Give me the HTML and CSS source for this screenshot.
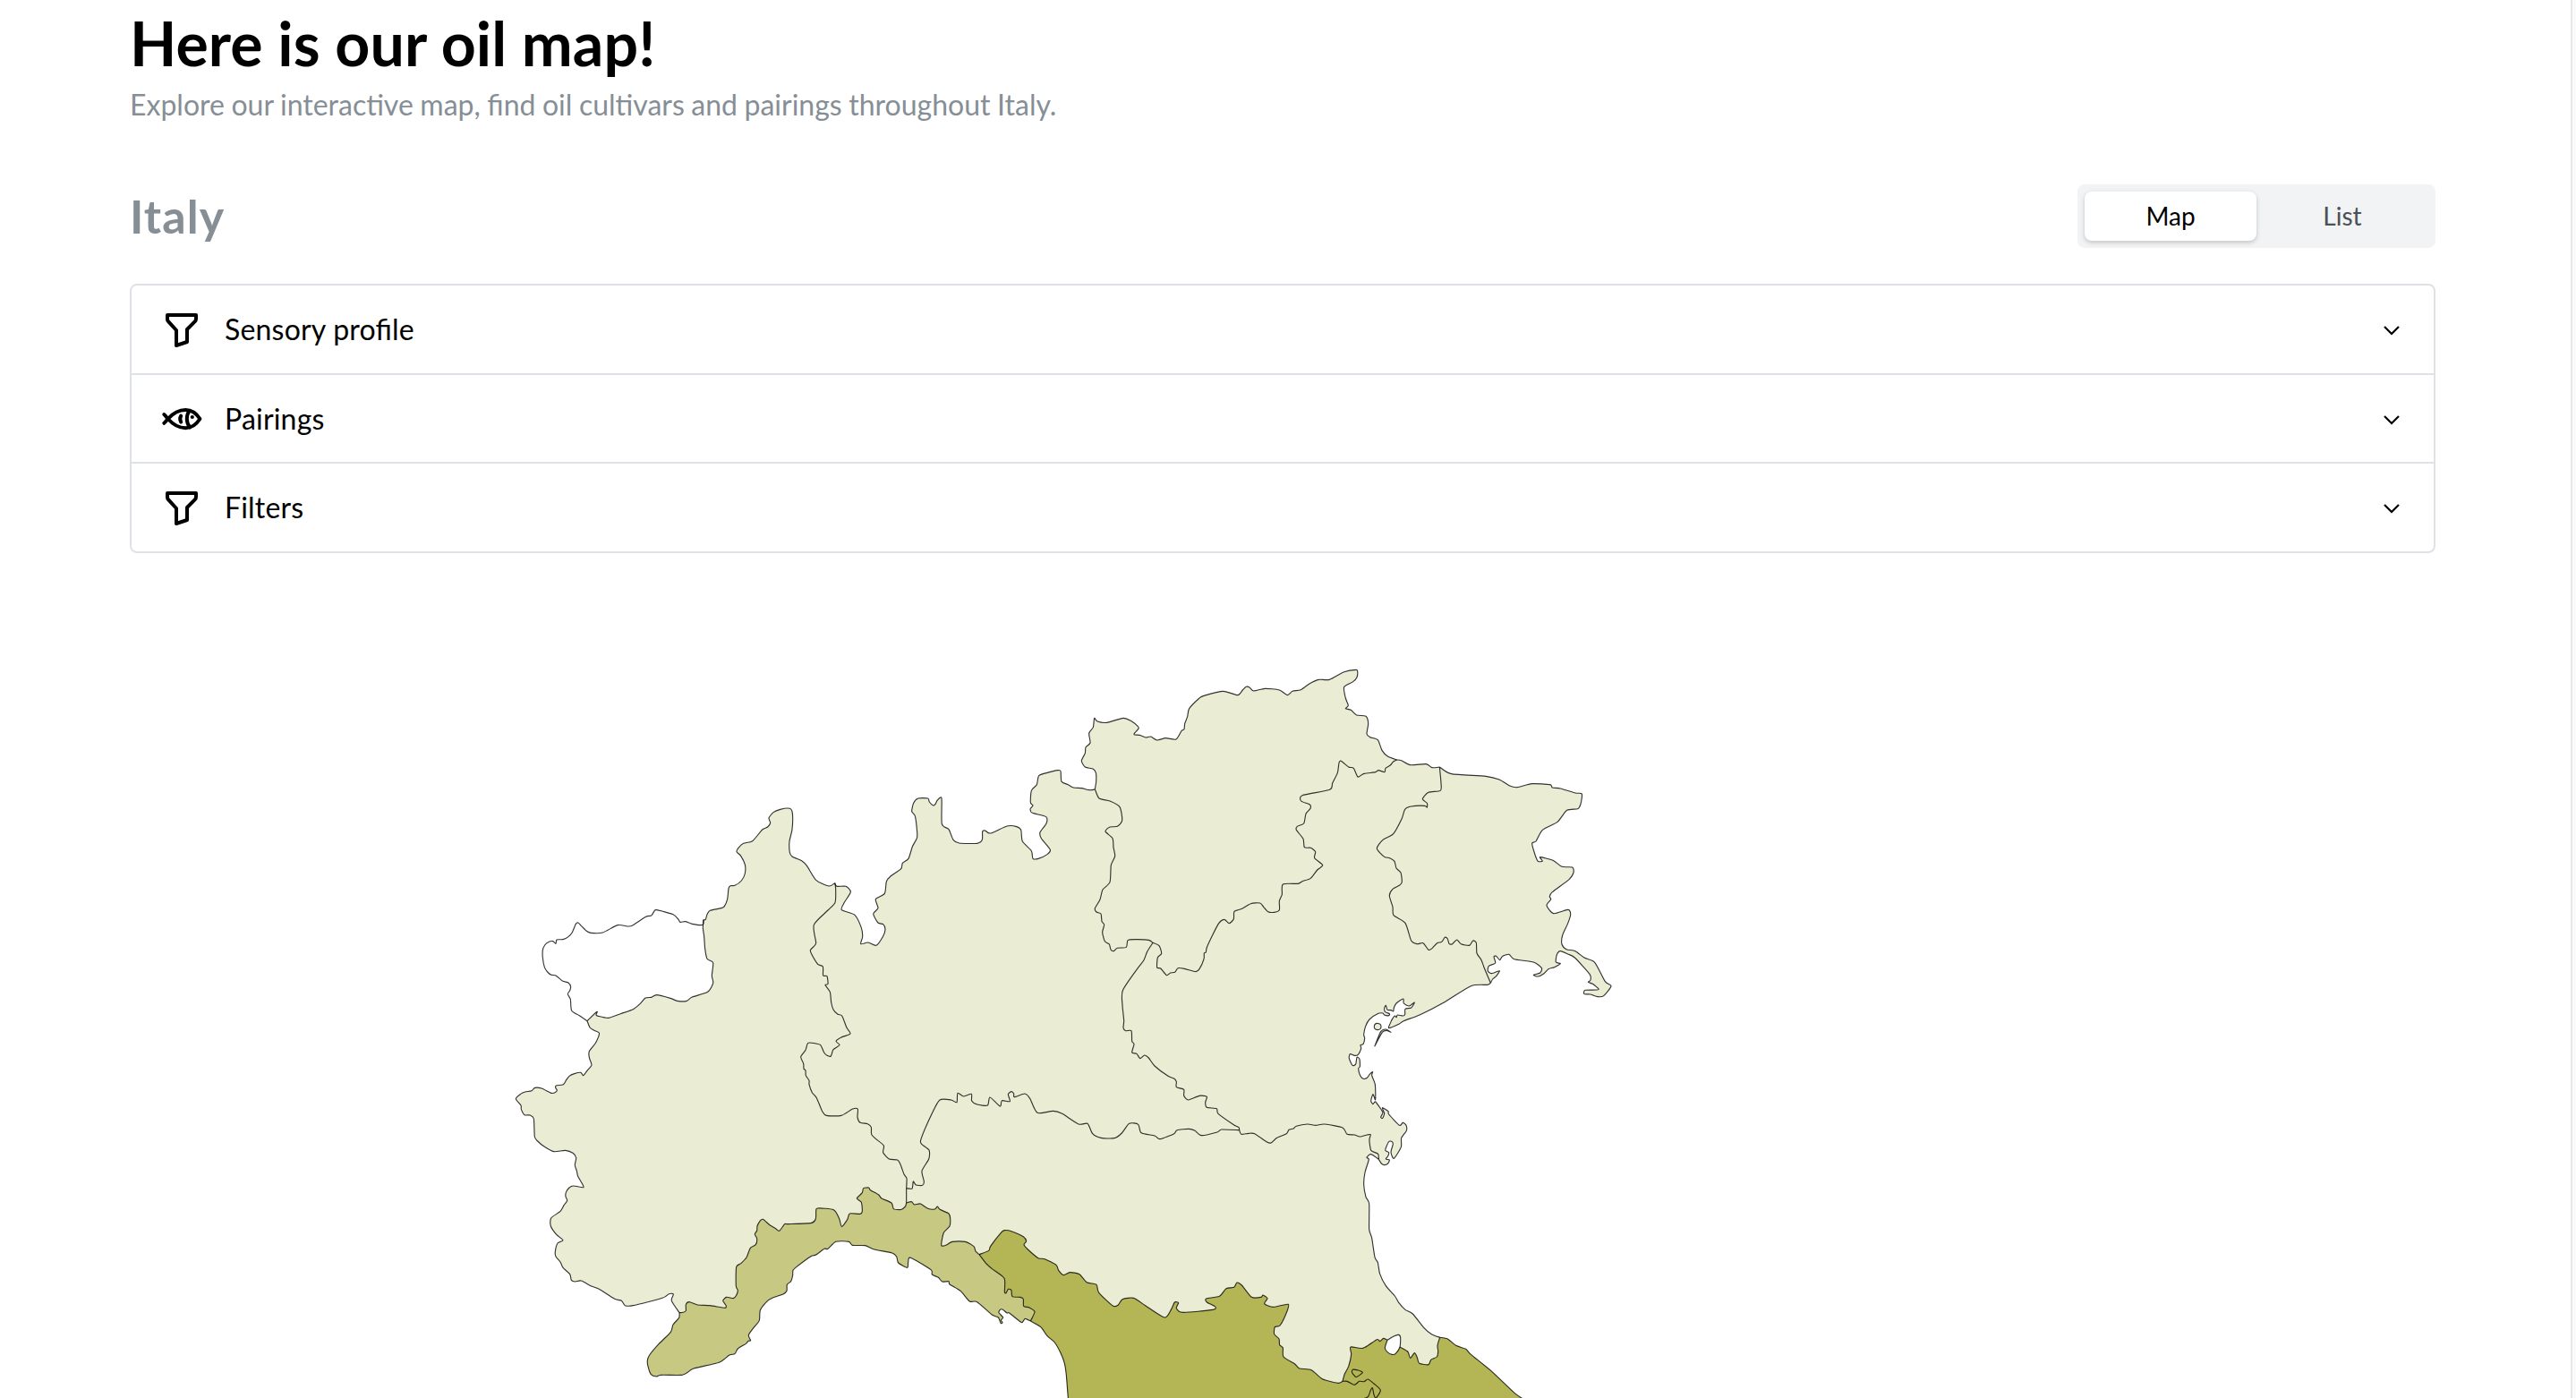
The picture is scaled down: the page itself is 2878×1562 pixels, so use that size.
FILE: index.html
```html
<!DOCTYPE html>
<html lang="en">
<head>
<meta charset="utf-8">
<title>Oil map</title>
<link rel="stylesheet" href="styles.css">
</head>
<body>
<div class="page">
  <main class="container">
    <header class="intro">
      <h1 class="intro-title">Here is our oil map!</h1>
      <p class="intro-text">Explore our interactive map, find oil cultivars and pairings throughout Italy.</p>
    </header>
    <div class="toolbar">
      <h2 class="area-name">Italy</h2>
      <div class="segmented" role="tablist">
        <button class="segment segment-active" role="tab">Map</button>
        <button class="segment" role="tab">List</button>
      </div>
    </div>
    <div class="accordion">
      <div class="accordion-item">
        <svg class="item-icon" viewBox="0 0 24 24"><path d="M4 4h16v2.172a2 2 0 0 1 -.586 1.414l-4.414 4.414v7l-6 2v-8.5l-4.48 -4.928a2 2 0 0 1 -.52 -1.345v-2.227z"/></svg>
        <span class="item-label">Sensory profile</span>
        <svg class="chevron" viewBox="0 0 32 32"><path d="M8 13l8 8 8-8"/></svg>
      </div>
      <div class="accordion-item">
        <svg class="item-icon" viewBox="0 0 48 48">
          <path class="fish-line" d="M4.3 19C6 20.4 7.2 22.2 8.6 24C14.5 17.5 20.5 14 28.3 14C35.5 14 40.5 18 44.4 24C40.5 30 35.5 34.2 28.3 34.2C20.5 34.2 14.5 30.5 8.6 24C7.2 25.8 6 27.4 4.3 28.8"/>
          <path class="fish-line" d="M32.6 15C28.8 20 28.8 28 33 33.4M23.2 20.6C22 22.6 22 25.4 23.2 27.6"/>
          <circle class="fish-eye" cx="35.8" cy="22" r="2.1"/>
        </svg>
        <span class="item-label">Pairings</span>
        <svg class="chevron" viewBox="0 0 32 32"><path d="M8 13l8 8 8-8"/></svg>
      </div>
      <div class="accordion-item">
        <svg class="item-icon" viewBox="0 0 24 24"><path d="M4 4h16v2.172a2 2 0 0 1 -.586 1.414l-4.414 4.414v7l-6 2v-8.5l-4.48 -4.928a2 2 0 0 1 -.52 -1.345v-2.227z"/></svg>
        <span class="item-label">Filters</span>
        <svg class="chevron" viewBox="0 0 32 32"><path d="M8 13l8 8 8-8"/></svg>
      </div>
    </div>
    <svg class="map" id="map" viewBox="0 0 3900 2526" role="img" aria-label="Map of the Italian regions"></svg>
  </main>
  <div class="scroll-track"></div>
</div>
<script src="map.js"></script>
</body>
</html>
```
FILE: styles.css
```css
* {
  box-sizing: border-box;
}

body {
  margin: 0;
  height: 100vh;
  overflow: hidden;
  background: #fff;
  color: #000;
  font-family: Lato, "Liberation Sans", sans-serif;
}

.page {
  display: flex;
  height: 100%;
}

.container {
  flex: 1;
  min-width: 0;
  padding: 4px 151px 0 145px;
}

.intro-title {
  margin: 0;
  font-size: 68px;
  font-weight: 700;
  line-height: 88px;
  letter-spacing: 0.1px;
}

.intro-text {
  margin: 0;
  font-size: 32px;
  line-height: 50px;
  word-spacing: -0.65px;
  color: #868e96;
}

.toolbar {
  display: flex;
  align-items: center;
  justify-content: space-between;
  margin: 64px 0 40px;
}

.area-name {
  margin: 0;
  font-size: 52px;
  font-weight: 700;
  line-height: 71px;
  letter-spacing: 1.1px;
  color: #868e96;
}

.segmented {
  display: flex;
  width: 400px;
  height: 71px;
  padding: 8px;
  border-radius: 8px;
  background: #f1f3f5;
}

.segment {
  flex: 1;
  padding: 0;
  border: 0;
  border-radius: 8px;
  background: none;
  font: 400 28px/55px Lato, "Liberation Sans", sans-serif;
  color: #495057;
}

.segment-active {
  background: #fff;
  color: #000;
  box-shadow: 0 2px 6px rgba(0, 0, 0, 0.1), 0 2px 4px rgba(0, 0, 0, 0.1);
}

.accordion {
  display: grid;
  grid-template-rows: 100px 99px 98px;
  border: 2px solid #dee2e6;
  border-radius: 8px;
}

.accordion-item {
  display: flex;
  align-items: center;
  padding: 0 31px 0 32px;
  border-bottom: 2px solid #dee2e6;
}

.accordion-item:last-child {
  border-bottom: 0;
}

.item-icon {
  width: 48px;
  height: 48px;
  margin-right: 24px;
  fill: none;
  stroke: #000;
  stroke-width: 2;
  stroke-linecap: round;
  stroke-linejoin: round;
}

.fish-line {
  stroke-width: 4;
}

.fish-eye {
  fill: #000;
  stroke: none;
}

.item-label {
  flex: 1;
  font-size: 32px;
  line-height: 50px;
  letter-spacing: 0.2px;
  font-feature-settings: "liga" 1;
}

.chevron {
  width: 32px;
  height: 32px;
  fill: none;
  stroke: #000;
  stroke-width: 2.2;
}

.map {
  display: block;
  width: 1300px;
  height: 842px;
  margin: 102px 0 0 415px;
}

.region {
  stroke: none;
}

.region-none {
  fill: #fff;
}

.region-low {
  fill: #eaecd4;
}

.region-medium {
  fill: #c7c881;
}

.region-high {
  fill: #b4b655;
}

.border {
  fill: none;
  stroke: #000;
  stroke-opacity: 0.8;
  stroke-width: 3.4;
  stroke-linejoin: round;
}

.scroll-track {
  width: 6px;
  border-left: 2px solid #e8e8e8;
  background: #fafafa;
}
```
FILE: map.js
```js
// Borders shared between regions. Each arc is a list of [x offset, y offset, points] pieces.
const ARCS = {
  aostaOuter: [[0, 420, "678,503 675,520 640,517 617,509 600,511 594,502 576,485 521,470 513,474 503,489 485,493 440,522 425,525 390,521 340,546 300,547 285,540 268,523 258,513 250,517 238,545 225,560 207,569 186,570 183,583 173,575 160,577 146,588 139,605 139,630 145,662 155,678 168,688 183,690 205,708 225,714 233,728 230,740 223,752 232,770 236,808 262,824 288,842"]],
  aostaInner: [[0, 420, "678,503 676,530 680,560 683,600 690,634 710,647 706,690 710,715 692,745 640,762 622,775 590,775 567,766 521,755 503,763 483,765 465,785 442,803 400,818 360,832 325,826 318,822 321,811 288,842"]],
  piemonteWest: [
    [0, 420, "288,842 297,864 310,873 328,882 326,895 315,918 295,944 295,965 303,990 290,1006 275,1025 267,1015 245,1019 228,1027 218,1040 208,1055 184,1059 182,1066 187,1074 182,1081 168,1084 135,1068 113,1066 102,1076 80,1080 65,1087 49,1103"],
    [0, 1380, "66,165 67,178 78,197 97,198 109,210 112,270 122,285 145,304 176,320 215,316 240,325 251,341 247,365 253,385 257,403 270,425 275,440 242,435 228,441 217,457 216,471 221,484 210,500 198,520 167,543 166,570 185,598 207,617 189,627 181,655 183,672 198,690 207,709 230,731 235,751 248,756 268,753 300,770 328,781 380,814 403,820 415,836 442,836 540,811 562,797 577,798 571,820 597,860"]],
  piemonteNorth: [[0, 420, "678,503 685,502 690,485 700,472 738,464 748,458 758,434 762,398 768,389 783,388 805,372 817,348 817,318 803,289 789,275 795,262 812,247 842,239 875,201 893,192 902,178 897,162 912,143 935,133 967,130 976,146 975,200 966,240 967,277 975,291 1008,306 1025,323 1055,370 1098,390 1118,380"]],
  piemonteLombardia: [
    [0, 420, "1118,380 1121,400 1119,445 1095,471 1048,520 1055,580 1048,592 1036,605 1042,622 1061,652 1078,660 1079,690 1092,692 1095,718 1086,722 1102,745 1106,780 1113,804 1128,820 1142,825 1158,865 1170,885 1140,897 1122,910 1134,923 1113,938 1105,960 1092,958 1082,948 1070,923 1050,917 1028,916 1020,940 1004,962 1013,985 1014,1002 1020,1008 1021,1025 1032,1042 1032,1055 1042,1082 1057,1100 1076,1145 1090,1159 1140,1159 1178,1137 1195,1138"],
    [0, 1380, "1194,205 1203,223 1228,227 1240,238 1241,262 1255,277 1282,300 1280,323 1300,345 1328,348 1338,363 1350,396 1359,410 1358,443"]],
  piemonteEmilia: [[0, 1380, "1358,443 1358,492"]],
  piemonteLiguria: [[0, 1380, "1358,492 1355,503 1345,512 1335,515 1315,512 1308,492 1275,477 1265,465 1237,449 1232,441 1214,443 1210,458 1192,477 1207,490 1210,520 1203,529 1168,528 1160,548 1141,571 1133,545 1114,515 1060,510 1055,520 1054,545 1040,559 960,563 950,563 932,586 920,578 900,566 877,547 867,553 858,570 857,585 850,597 857,612 853,632 835,643 822,675 803,695 788,707 787,770 793,785 788,802 778,812 755,808 743,820 753,835 750,844 700,836 658,834 630,824 619,833 619,853 610,859 597,860"]],
  liguriaCoast: [
    [0, 1380, "597,860 596,877 576,900 568,925 528,965 497,1002 490,1020 492,1040 502,1067 520,1074 535,1069 605,1069 625,1060 645,1047 730,1027 765,1002 783,998 793,981 820,964 828,955 836,953 829,935 848,908 865,886 868,852 890,823 910,810 945,798 957,787 958,766 971,755 977,735 978,718 990,706 1038,671 1055,666 1083,646 1095,646 1122,622 1165,622 1177,634 1220,635 1250,648 1310,660 1325,672 1331,693 1361,709 1364,690 1372,676"],
    [1200, 1380, "240,716 244,732 265,742 278,756 300,755 303,765 340,788 370,822 395,824 445,867 466,876 474,895 480,893 475,885 482,876 468,860 472,850 480,849 495,861 503,861 542,892 550,888 556,880 574,888"]],
  liguriaEmilia: [[1200, 1380, "158,492 175,488 185,498 205,495 230,511 253,513 262,504 270,514 300,528 305,545 303,570 283,592 275,634 290,634 312,622 355,622 384,638 390,654 402,665"]],
  liguriaToscana: [[1200, 1380, "402,665 425,695 445,713 486,745 487,790 492,794 500,781 510,785 513,806 540,808 550,815 551,838 570,843 588,857 574,888"]],
  emiliaToscana: [
    [1200, 1380, "402,665 434,652 440,637 475,592 487,584 510,587 550,605 560,620 552,632 565,648 600,677 622,680 660,700 668,718 685,734 706,725 738,731 762,758 795,766 803,793 850,837 868,834 882,815 920,811 960,837 1023,876 1045,850 1057,825 1070,827 1063,845 1085,859 1185,850 1193,840 1165,825 1163,813 1207,805 1230,779 1256,775 1266,759 1282,768 1315,808 1347,808 1353,801 1368,812 1358,830 1388,841 1438,832"],
    [2280, 1620, "350,625 330,663 313,668 311,692 327,708 329,728 340,738 342,768 380,792 395,807 435,812 472,842 524,856 540,850"]],
  emiliaMarche: [[2280, 1620, "540,850 547,825 560,800 569,760 567,735 608,739 655,710 665,716 677,706 690,712 715,725 732,735 758,750 767,772 781,755 790,770 797,790 828,794 836,778 856,768 860,750 858,730 866,703"]],
  emiliaCoast: [[2280, 1620, "866,703 838,692 812,670 775,624 750,610 728,586 715,564 685,530 665,490 658,452 648,434 638,370 629,340 629,255 618,232 611,190 615,150 628,107 621,100 632,89 642,92 661,106"]],
  emiliaVeneto: [[2040, 960, "901,766 899,748 876,737 871,715 870,697 874,683 862,684 838,690 820,684 795,682 780,660 720,648 690,652 662,648 625,655 615,663 600,667 592,680 560,694 540,711 525,707 485,680 465,679 440,682 434,668"]],
  emiliaLombardia: [[1200, 1380, "158,443 177,444 181,420 190,432 212,433 217,420 210,385 233,345 234,315 208,294 208,275 245,190 270,147 308,147 327,155 330,124 350,135 376,127 377,150 395,162 430,165 438,138 472,168 478,149 505,152 499,128 510,119 518,126 520,137 555,126 572,142 597,190 650,184 680,193 735,228 765,226 782,260 810,274 855,275 880,258 905,226 935,229 945,257 990,267 1008,278 1055,260 1065,248 1105,244 1125,250 1147,266 1200,255 1215,246 1274,248"]],
  lombardiaVeneto: [[2040, 960, "144,40 125,70 113,100 90,130 43,200 42,250 47,300 45,325 53,335 72,335 74,370 81,380 74,408 90,412 101,428 116,417 130,426 150,453 195,487 215,495 223,506 223,524 248,532 248,553 263,567 300,553 325,556 320,575 325,592 358,596 363,613 415,650 432,659 434,668"]],
  lombardiaTrentino: [[1740, 0, "250,485 264,516 300,525 333,545 341,590 325,610 300,612 285,627 309,650 312,680 317,710 304,740 300,797 276,822 267,855 250,885 255,897 270,903 273,928 281,940 275,965 283,995 298,1005 303,1023 313,1028 325,1018 355,1015 360,992 385,989 430,991 444,1000"]],
  lombardiaNorth: [[960, 420, "158,380 165,391 195,391 211,410 190,445 181,470 225,487 247,530 251,560 245,584 270,579 297,589 320,558 327,535 320,518 303,513 287,483 303,464 295,434 325,415 331,375 345,357 380,332 385,313 405,298 418,258 433,230 434,210 427,155 416,140 422,112 437,96 470,96 475,108 488,120 495,115 502,102 516,96 517,182 540,200 555,235 575,246 635,247 652,235 653,207 662,204 680,213 735,189 765,190 782,202 787,240 817,272 822,298 840,298 870,284 880,268 850,230 846,210 867,180 866,158 820,145 813,132 822,120 814,110 817,70 835,50 842,20 870,10 905,2 915,5 918,40 940,50 958,60 985,62 1010,68 1025,67 1030,65"]],
  trentinoNorth: [[1740, 0, "250,485 254,460 253,430 243,417 217,411 205,390 217,365 219,345 234,330 230,298 244,278 248,247 258,258 290,262 345,247 370,256 395,276 395,284 382,298 383,303 400,304 420,312 437,309 458,321 487,314 522,318 540,290 549,284 551,266 560,242 566,215 600,180 615,172 680,157 728,170 745,153 757,142 768,144 782,156 820,148 868,153 895,170 912,157 940,152 970,131 1000,118 1036,118 1085,92 1125,85 1130,90 1128,110 1115,125 1085,143 1090,180 1099,205 1090,215 1108,220 1127,237 1158,241 1166,265 1161,300 1172,311 1198,320 1212,355 1232,376 1262,387"]],
  trentinoVeneto: [[1740, 0, "1262,387 1250,393 1240,405 1224,415 1221,428 1200,422 1190,428 1150,434 1131,444 1117,415 1100,411 1075,391 1068,397 1063,430 1046,465 1037,487 945,506 941,525 970,537 972,550 957,568 950,600 928,610 925,622 948,652 952,680 973,682 989,695 986,716 1013,740 995,756 973,784 945,794 930,802 880,804 877,838 868,860 868,890 850,898 830,896 815,880 803,867 772,869 743,886 717,895 715,920 700,935 683,922 663,938 626,1013 622,1032 616,1035 615,1055 600,1088 588,1097 550,1087 528,1085 518,1099 503,1101 490,1109 470,1086 458,1083 460,1050 473,1036 465,1010 444,1000"]],
  venetoNorth: [[2520, 0, "482,387 497,389 527,404 580,401 600,413 625,411"]],
  venetoFriuli: [[2520, 0, "625,411 630,465 628,490 588,496 568,518 583,532 583,546 575,541 530,543 509,553 498,585 470,635 435,655 415,684 440,712 458,716 474,727 480,750 495,765 499,795 493,806 468,820 457,842 468,880 471,908 510,934 530,993 550,1004 570,1001 588,1024 600,1019 617,1001 632,997 643,982 652,987 657,1003 668,1004 683,990 697,1004 725,1009 737,993 748,1000 750,1035 765,1058 775,1085 796,1135"]],
  friuliOuter: [[2520, 0, "625,411 665,434 780,442 825,453 860,474 885,479 935,467 995,470 1003,480 1030,483 1080,498 1102,501 1098,535 1088,551 1052,556 1020,595 970,622 948,660 935,667 945,705 955,727 970,726 962,713 1005,724 1035,745 1070,747 1074,765 1060,787 1003,830 994,845 998,855 984,875 1007,902 1055,889 1064,905 1055,935 1037,975 1035,1005 1050,1022 1080,1028 1110,1050 1145,1066 1180,1130 1200,1145 1175,1178 1155,1181 1130,1173 1110,1172 1113,1159 1158,1157 1138,1138 1123,1132 1131,1125 1128,1105 1078,1050 1055,1038 1030,1028 1018,1040 1015,1065 1030,1070 1010,1082 990,1088 975,1103 955,1113 940,1108 962,1101 967,1085 940,1065 875,1055 858,1039 835,1046 827,1058 815,1045 807,1047 812,1068 790,1078 787,1095 800,1103 826,1094 815,1112 803,1122 796,1135"]],
  venetoCoast: [[2760, 960, "556,175 545,181 490,185 400,240 320,281 265,302 250,312 215,326 222,305 227,295 235,285 240,290 244,282 262,285 269,280 270,262 290,258 301,240 283,252 265,243 263,228 240,243 232,258 230,270 222,266 210,265 205,250 200,260 203,272 217,278 215,284 200,282 195,276 180,277 150,297 137,320 131,348 134,360 129,380 120,383 122,395 112,415 100,418 85,413 82,428 93,451 104,447 108,424 117,430 118,455 113,462 119,485 130,496 142,493 150,482 161,473 158,485 169,515 170,566 162,548 155,570 162,581 170,573 190,600 195,610 188,625 194,628 200,612 193,593 213,605 215,615 250,652 262,643 273,652 274,670 257,695 256,725 232,763 222,742 229,715 224,706 214,708 203,735 215,743 212,755 205,765 217,768 212,780 200,785 190,780 181,766"]],
  toscanaCoast: [[1200, 1380, "574,888 608,908 630,938 655,960 675,995 688,1030 694,1070 701,1160"]],
  marcheCoast: [[2280, 1620, "866,703 892,708 920,730 953,742 970,760 1040,817 1117,890 1150,912"]],
  toscanaMarche: [[2280, 1620, "540,850 555,850 580,862 596,850 612,851 625,843 645,858 667,880 652,906 645,895 640,872 634,880 625,902 605,910"]],
  enclave: [[2280, 1620, "574,810 592,813 607,820 600,827 585,836 575,826 571,818 574,810"]],
  sanMarino: [[2280, 1620, "690,712 710,700 727,694 734,703 732,735 718,757 705,760 690,752 682,738 690,712"]],
  murano: [[2760, 960, "177,310 186,313 189,321 186,329 177,332 168,328 166,319 170,312 177,310"]],
  lido: [[2760, 960, "167,388 188,338 205,330 222,340 208,334 193,340 167,388"]]
};

// Regions as rings of arcs joined end to end; a leading "-" walks the arc backwards.
const REGIONS = [
  ["none", "aostaOuter -aostaInner"],
  ["low", "piemonteNorth piemonteLombardia piemonteEmilia piemonteLiguria -piemonteWest -aostaInner"],
  ["low", "lombardiaNorth lombardiaTrentino lombardiaVeneto -emiliaLombardia -piemonteLombardia"],
  ["low", "trentinoNorth trentinoVeneto -lombardiaTrentino"],
  ["low", "venetoNorth venetoFriuli venetoCoast emiliaVeneto -lombardiaVeneto -trentinoVeneto"],
  ["low", "friuliOuter -venetoFriuli"],
  ["low", "emiliaLombardia -emiliaVeneto -emiliaCoast -emiliaMarche -emiliaToscana -liguriaEmilia -piemonteEmilia"],
  ["medium", "liguriaCoast -liguriaToscana -liguriaEmilia piemonteLiguria"],
  ["high", "toscanaCoast -marcheCoast -emiliaMarche -emiliaToscana liguriaToscana"],
  ["high", "enclave"],
  ["low", "murano"],
  ["low", "lido"]
];

const points = {};
for (const name in ARCS) {
  points[name] = ARCS[name].flatMap(([dx, dy, list]) =>
    list.split(" ").map(pair => {
      const [x, y] = pair.split(",").map(Number);
      return [x + dx, y + dy];
    }));
}

// Gently rounds the corners of a polyline with cubic segments.
function curve(p) {
  const k = 0.12;
  let d = "";
  for (let i = 0; i < p.length - 1; i++) {
    const a = p[i - 1] || p[i], b = p[i], c = p[i + 1], e = p[i + 2] || c;
    d += "C" + [
      b[0] + (c[0] - a[0]) * k, b[1] + (c[1] - a[1]) * k,
      c[0] - (e[0] - b[0]) * k, c[1] - (e[1] - b[1]) * k,
      c[0], c[1]
    ].map(v => v.toFixed(1)).join(" ");
  }
  return d;
}

function addPath(className, d) {
  const path = document.createElementNS("http://www.w3.org/2000/svg", "path");
  path.setAttribute("class", className);
  path.setAttribute("d", d);
  document.getElementById("map").appendChild(path);
}

for (const [level, ring] of REGIONS) {
  const arcs = ring.split(" ").map(ref =>
    ref[0] === "-" ? points[ref.slice(1)].slice().reverse() : points[ref]);
  addPath("region region-" + level, "M" + arcs[0][0] + arcs.map(arc => "L" + arc[0] + curve(arc)).join("") + "Z");
}

for (const name in points) {
  if (name !== "sanMarino") addPath("border", "M" + points[name][0] + curve(points[name]));
}
addPath("region region-none", "M" + points.sanMarino[0] + curve(points.sanMarino) + "Z");
addPath("border", "M" + points.sanMarino[0] + curve(points.sanMarino));
```
